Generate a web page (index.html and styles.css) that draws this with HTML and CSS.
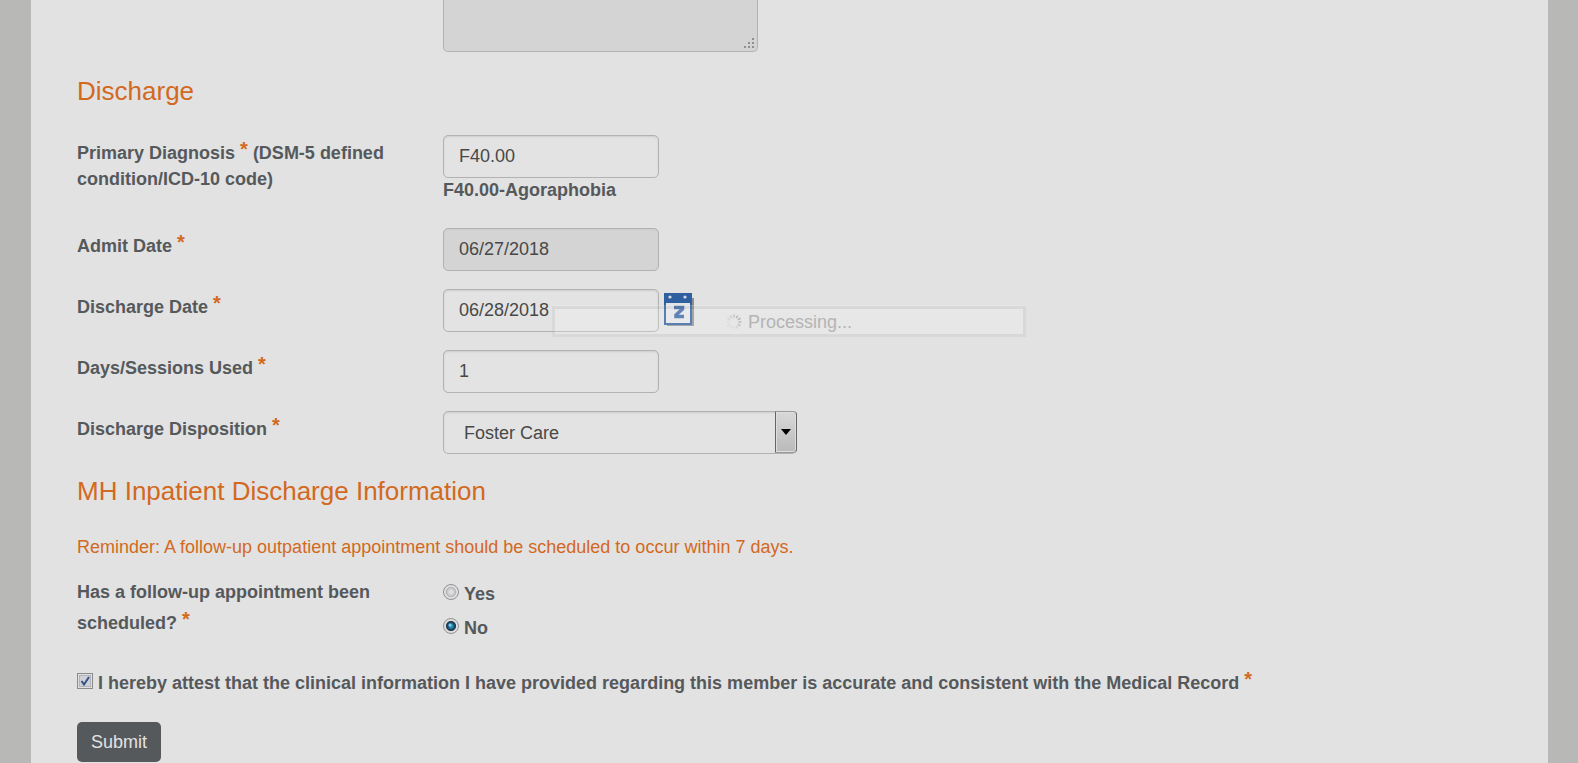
FILE: index.html
```html
<!DOCTYPE html>
<html lang="en">
<head>
<meta charset="utf-8">
<title>Discharge</title>
<link rel="stylesheet" href="styles.css">
</head>
<body>
<main class="page">
  <form class="form">
    <div class="row notes-row">
      <span></span>
      <div class="notes-wrap">
        <textarea class="control notes" aria-label="Notes" readonly></textarea>
        <svg class="grip" viewBox="0 0 12 12" aria-hidden="true"><path d="M9 0h2v2H9zM5 4h2v2H5zM9 4h2v2H9zM1 8h2v2H1zM5 8h2v2H5zM9 8h2v2H9z"/></svg>
      </div>
    </div>

    <h2 class="heading">Discharge</h2>

    <div class="row diagnosis-row">
      <label class="label" for="diagnosis">Primary Diagnosis <sup class="req">*</sup> (DSM-5 defined condition/ICD-10 code)</label>
      <div>
        <input class="control" id="diagnosis" type="text" value="F40.00">
        <div class="hint">F40.00-Agoraphobia</div>
      </div>
    </div>
    <div class="row">
      <label class="label" for="admit">Admit Date <sup class="req">*</sup></label>
      <input class="control locked" id="admit" type="text" value="06/27/2018" readonly>
    </div>
    <div class="row">
      <label class="label" for="discharge">Discharge Date <sup class="req">*</sup></label>
      <div class="date">
        <input class="control" id="discharge" type="text" value="06/28/2018">
        <button class="calendar" type="button" aria-label="Choose date">
          <svg viewBox="0 0 32 36" width="32" height="36" aria-hidden="true">
            <path d="M4 6h27v28H4z" fill="#8d8f92"/>
            <path d="M1 1h28v32H1z" fill="#305f9f"/>
            <path d="M3 11h24v20H3z" fill="#e3e4e6"/>
            <circle cx="7" cy="5" r="1.6" fill="#d5dbe4"/>
            <circle cx="22" cy="5" r="1.6" fill="#d5dbe4"/>
            <path d="M11 15.500h8.500v1.500l-6.500 6v1.500h8" fill="none" stroke="#3a66a5" stroke-width="3.500"/>
          </svg>
        </button>
      </div>
    </div>
    <div class="row">
      <label class="label" for="days">Days/Sessions Used <sup class="req">*</sup></label>
      <input class="control" id="days" type="text" value="1">
    </div>
    <div class="row">
      <label class="label" for="disposition">Discharge Disposition <sup class="req">*</sup></label>
      <div class="select-wrap">
        <select class="control select" id="disposition"><option>Foster Care</option></select>
        <span class="arrow" aria-hidden="true"><svg viewBox="0 0 10 6" width="10" height="6"><path d="M0 0h10L5 6z"/></svg></span>
      </div>
    </div>

    <h2 class="heading second">MH Inpatient Discharge Information</h2>
    <p class="reminder">Reminder: A follow-up outpatient appointment should be scheduled to occur within 7 days.</p>

    <div class="row followup" role="radiogroup" aria-labelledby="followup">
      <div class="question" id="followup">Has a follow-up appointment been scheduled? <sup class="req">*</sup></div>
      <div class="options">
        <label class="option"><input class="radio" type="radio" name="followup"><span>Yes</span></label>
        <label class="option"><input class="radio" type="radio" name="followup" checked><span>No</span></label>
      </div>
    </div>

    <label class="option attest"><input class="check" type="checkbox" checked><span>I hereby attest that the clinical information I have provided regarding this member is accurate and consistent with the Medical Record <sup class="req">*</sup></span></label>

    <button class="submit" type="button">Submit</button>
  </form>
</main>
<div class="processing" role="status">
  <svg class="spinner" viewBox="-8 -8 16 16" width="16" height="16" aria-hidden="true">
    <g stroke="#b4b4b4" stroke-width="1.500">
      <path d="M0-4.500V-7.500" opacity=".7"/>
      <path d="M0-4.500V-7.500" transform="rotate(30)" opacity=".9"/>
      <path d="M0-4.500V-7.500" transform="rotate(60)"/>
      <path d="M0-4.500V-7.500" transform="rotate(90)" opacity=".9"/>
      <path d="M0-4.500V-7.500" transform="rotate(120)" opacity=".7"/>
      <path d="M0-4.500V-7.500" transform="rotate(150)" opacity=".4"/>
      <path d="M0-4.500V-7.500" transform="rotate(180)" opacity=".2"/>
      <path d="M0-4.500V-7.500" transform="rotate(210)" opacity=".2"/>
      <path d="M0-4.500V-7.500" transform="rotate(240)" opacity=".2"/>
      <path d="M0-4.500V-7.500" transform="rotate(270)" opacity=".2"/>
      <path d="M0-4.500V-7.500" transform="rotate(300)" opacity=".3"/>
      <path d="M0-4.500V-7.500" transform="rotate(330)" opacity=".5"/>
    </g>
  </svg>
  <span>Processing...</span>
</div>
</body>
</html>
```

FILE: styles.css
```css
* { box-sizing: border-box; }

body {
  margin: 0;
  background: #b8b8b6;
  color: #55595c;
  font: 18px/26px "Liberation Sans", Arial, sans-serif;
  overflow: hidden;
}

.page {
  margin: 0 30px 0 31px;
  min-height: 100vh;
  padding: 0 46px;
  background: #e2e2e2;
}

.form { display: flex; flex-direction: column; }

.row {
  display: grid;
  grid-template-columns: 366px 1fr;
  align-items: start;
  margin-bottom: 18px;
}

.control {
  display: block;
  width: 216px;
  height: 43px;
  margin: 0;
  padding: 0 15px;
  border: 1px solid #b2b2b2;
  border-radius: 5px;
  background: #e3e3e3;
  box-shadow: inset 0 1px 2px #cccccc;
  color: #484848;
  font: inherit;
}

.locked, .notes { background: #d4d4d4; }

.notes-row { margin-bottom: 0; }
.notes-wrap { position: relative; width: 315px; }
.notes {
  width: 100%;
  height: 52px;
  border-top: 0;
  border-radius: 0 0 5px 5px;
  box-shadow: none;
  resize: none;
}
.grip {
  position: absolute;
  right: 3px;
  bottom: 2px;
  width: 12px;
  height: 12px;
  fill: #909090;
}

.heading {
  margin: 22px 0 27px;
  color: #d2691e;
  font-size: 26px;
  font-weight: 400;
  line-height: 34px;
}
.heading.second { margin: 2px 0 26px; }

.label, .question, .hint, .option { font-weight: 700; }
.label { padding: 5px 40px 0 0; }
.hint { line-height: 24px; }
.diagnosis-row { margin-bottom: 26px; }

.req {
  color: #d2691e;
  font-size: 20px;
  line-height: 0;
  vertical-align: 3px;
}

.date { display: flex; gap: 4px; }
.calendar {
  width: 32px;
  height: 36px;
  margin-top: 3px;
  padding: 0;
  border: 0;
  background: none;
}
.calendar svg { display: block; }

.select-wrap { position: relative; width: 354px; }
.select {
  width: 100%;
  padding: 0 20px;
  appearance: none;
}
.arrow {
  position: absolute;
  top: 0;
  right: 0;
  display: grid;
  place-items: center;
  width: 22px;
  height: 42px;
  border: 1px solid #666666;
  border-top-color: #999999;
  border-bottom-color: #999999;
  border-radius: 0 4px 4px 0;
  background: linear-gradient(#d8d8d8, #bababa);
  box-shadow: inset 0 0 0 1px #dedede;
  pointer-events: none;
}

.reminder {
  margin: 0 0 17px;
  color: #d2691e;
}

.followup { margin-bottom: 29px; }
.question { padding-right: 40px; line-height: 31px; }
.options { display: grid; gap: 8px; padding-top: 4px; }

.option { display: flex; align-items: flex-start; gap: 5px; }

.radio, .check {
  flex: none;
  width: 16px;
  height: 16px;
  margin: 3px 0 0;
  appearance: none;
}
.radio {
  border: 1px solid #929292;
  border-radius: 50%;
  background: radial-gradient(circle closest-side, #dcdee0 0 25%, #b4b6ba 68%, #dedede 78%);
}
.radio:checked {
  background:
    radial-gradient(circle at 6px 6px, #b8eefa 0, transparent 2px),
    radial-gradient(circle closest-side, #2f9dc6 0 15%, #16405f 55%, #26394a 66%, #dedede 78%);
}
.check {
  border: 1px solid #8b8b8b;
  background: url("data:image/svg+xml,%3Csvg xmlns='http://www.w3.org/2000/svg' viewBox='0 0 14 14'%3E%3Cpath d='M3.500 7L6 10.500 11 3' fill='none' stroke='%23374f8d' stroke-width='2'/%3E%3C/svg%3E") #cfd1d5;
  box-shadow: inset 0 0 0 1px #e0e0e0, inset 0 0 0 2px #b0b3b8;
}
.attest { margin-bottom: 26px; }

.submit {
  align-self: flex-start;
  height: 40px;
  padding: 0 14px;
  border: 0;
  border-radius: 5px;
  background: #55595c;
  color: #e3e3e3;
  font: inherit;
}

.processing {
  position: absolute;
  top: 306px;
  left: 35%;
  display: flex;
  align-items: center;
  justify-content: center;
  gap: 6px;
  width: 30%;
  height: 31px;
  border: 3px solid rgba(180, 180, 180, 0.22);
  background: rgba(255, 255, 255, 0.2);
  background-clip: padding-box;
  box-shadow: 0 -1px 0 rgba(255, 255, 255, 0.2);
  color: #b4b4b4;
}
```
